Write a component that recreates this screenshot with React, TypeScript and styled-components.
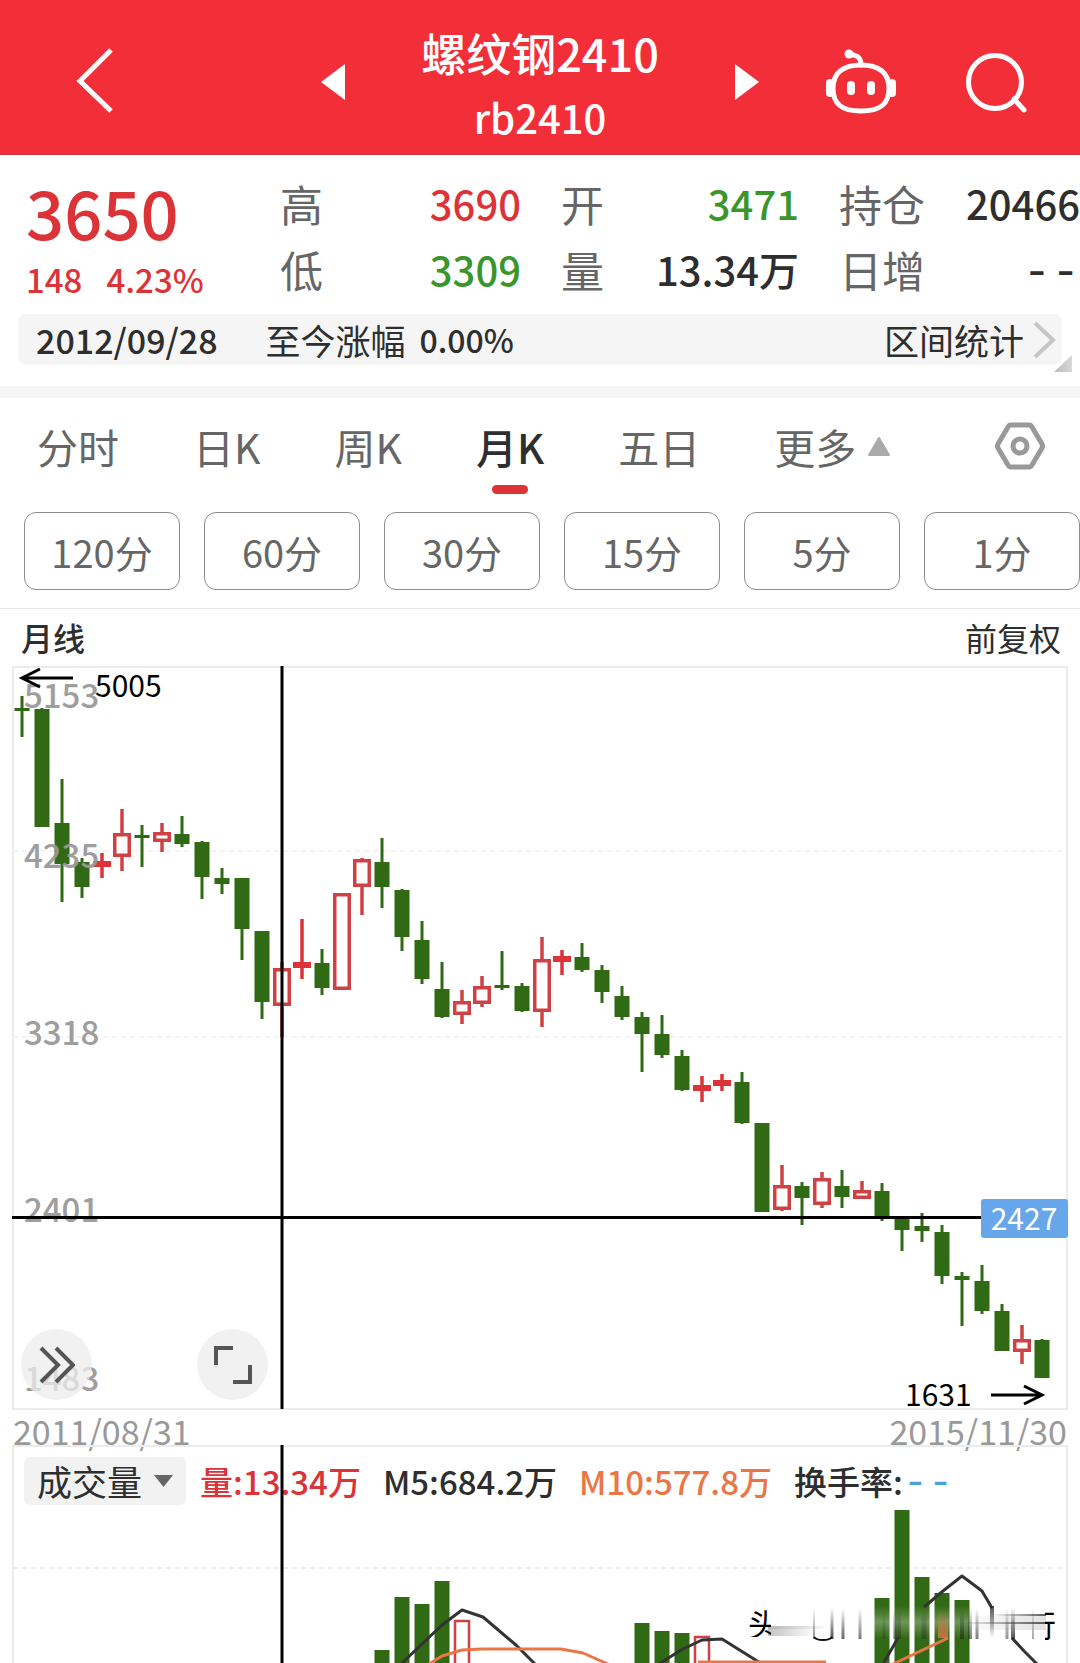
import React, { useState } from "react";
import styled, { createGlobalStyle } from "styled-components";

const c = {
  brand: "#f22f38",
  red: "#dc3338",
  green: "#3a962a",
  ink: "#2e2e2e",
  label: "#666666",
  axis: "#999999",
  candleGreen: "#316a14",
  candleRed: "#cf4145",
  orange: "#ea7646",
  panel: "#f5f5f5",
  rule: "#ececec",
};

const Global = createGlobalStyle`
  * { box-sizing: border-box; }
  body { margin: 0; background: #fff; }
  body, button, select, text {
    font-family: "Noto Sans CJK SC", "Noto Sans", sans-serif;
  }
  button { border: 0; padding: 0; background: none; color: inherit; cursor: pointer; }
  svg { display: block; }
`;

const Page = styled.main`
  overflow: hidden;
  color: ${c.ink};
`;

/* ---------- header ---------- */

const Header = styled.header`
  display: grid;
  grid-template-columns: 1fr auto 1fr;
  align-items: center;
  height: 155px;
  padding-top: 10px;
  background: ${c.brand};
  border-bottom: 1px solid #c8323a;
  color: #fff;
`;

const HeaderStart = styled.div`
  display: flex;
  padding-left: 76px;
  padding-bottom: 4px;
`;

const HeaderEnd = styled.div`
  display: flex;
  align-items: center;
  justify-content: flex-end;
  gap: 70px;
  padding-right: 52px;
`;

const Contract = styled.div`
  display: flex;
  align-items: center;
  justify-content: space-between;
  width: 438px;
`;

const Titles = styled.div`
  padding-top: 6px;
  text-align: center;
  line-height: 65px;
`;

const Name = styled.h1`
  margin: 0;
  font-size: 45px;
  font-weight: 500;
`;

const Code = styled.div`
  font-size: 40px;
  font-weight: 500;
`;

const IconButton = styled.button`
  display: flex;
  flex: none;
`;

/* ---------- quote ---------- */

const Quote = styled.section`
  position: relative;
  padding: 15px 0 21px;
  border-bottom: 12px solid ${c.panel};
`;

const QuoteGrid = styled.div`
  display: grid;
  grid-template-columns: 214px 241fr 238fr 241fr;
  column-gap: 40px;
  height: 132px;
  padding-left: 26px;
`;

const LastPrice = styled.div`
  color: ${c.red};
  font-weight: 500;
  white-space: nowrap;
`;

const Price = styled.div`
  font-size: 67px;
  line-height: 82px;
`;

const Change = styled.div`
  display: flex;
  gap: 24px;
  font-size: 33px;
  line-height: 54px;
`;

const Stats = styled.dl`
  margin: 0;
`;

const Stat = styled.div`
  display: flex;
  justify-content: space-between;
  line-height: 66px;
  white-space: nowrap;
`;

const StatLabel = styled.dt`
  font-size: 43px;
  color: ${c.label};
`;

const StatValue = styled.dd<{ $color: string }>`
  margin: 0;
  font-size: 40px;
  font-weight: 500;
  color: ${(p) => p.$color};
`;

const Dashes = styled.span<{ $color?: string; $size: number }>`
  font-family: "Liberation Mono", monospace;
  font-size: ${(p) => p.$size}px;
  font-weight: 400;
  line-height: 0;
  color: ${(p) => p.$color ?? "inherit"};
`;

const RangeBar = styled.div`
  display: flex;
  align-items: center;
  height: 51px;
  margin: 12px 18px 0;
  padding: 0 6px 0 18px;
  border-radius: 8px;
  background: ${c.panel};
  font-size: 34px;
  line-height: 47px;
  font-weight: 500;
`;

const RangeLabel = styled.span`
  margin-left: 48px;
  margin-right: 14px;
  font-size: 35px;
  font-weight: 400;
`;

const RangeValue = styled.span`
  font-size: 32px;
`;

const RangeButton = styled.button`
  display: flex;
  align-items: center;
  gap: 8px;
  margin-left: auto;
  font-size: 35px;
  line-height: 51px;
`;

const Corner = styled.svg`
  position: absolute;
  right: 8px;
  bottom: 14px;
`;

/* ---------- periods ---------- */

const Tabs = styled.nav`
  display: flex;
  align-items: center;
  gap: 74px;
  height: 96px;
  padding: 0 34px 0 37px;
`;

const Tab = styled.button<{ $active?: boolean }>`
  position: relative;
  display: flex;
  align-items: center;
  gap: 12px;
  font-size: 41px;
  line-height: 96px;
  color: ${(p) => (p.$active ? c.ink : c.label)};
  font-weight: ${(p) => (p.$active ? 500 : 400)};

  &::after {
    content: "";
    display: ${(p) => (p.$active ? "block" : "none")};
    position: absolute;
    bottom: 0;
    left: 50%;
    width: 36px;
    height: 9px;
    margin-left: -18px;
    border-radius: 5px;
    background: ${c.red};
  }
`;

const Settings = styled(IconButton)`
  margin-left: auto;
`;

const Pills = styled.div`
  display: flex;
  gap: 24px;
  padding: 18px 0 18px 24px;
  border-bottom: 1px solid #e4e4e4;
`;

const Pill = styled.button`
  flex: 1;
  height: 78px;
  border: 1px solid #8c8c8c;
  border-radius: 12px;
  font-size: 38px;
  color: ${c.label};
`;

const Caption = styled.div`
  display: flex;
  justify-content: space-between;
  padding: 0 19px 0 21px;
  font-size: 32px;
  line-height: 57px;
`;

const Strong = styled.span`
  font-weight: 500;
`;

/* ---------- charts ---------- */

const ChartBox = styled.section`
  position: relative;
`;

const Svg = styled.svg`
  width: 100%;
  height: auto;
  overflow: visible;
`;

const Tools = styled.div`
  position: absolute;
  left: 21px;
  bottom: 10px;
  display: flex;
  gap: 105px;
`;

const RoundButton = styled.button`
  display: flex;
  align-items: center;
  justify-content: center;
  width: 71px;
  height: 71px;
  border-radius: 50%;
  background: rgba(236, 236, 236, 0.75);
`;

const Dates = styled.div`
  display: flex;
  justify-content: space-between;
  height: 35px;
  padding: 0 13px;
  font-size: 34px;
  line-height: 41px;
  color: ${c.axis};
`;

const Volume = styled.section`
  position: relative;
  height: 218px;
`;

const Legend = styled.div`
  display: flex;
  align-items: center;
  gap: 22px;
  padding: 12px 0 0 24px;
  font-size: 33px;
  line-height: 47px;
  font-weight: 500;
  white-space: nowrap;
`;

const Indicator = styled.label`
  position: relative;
  display: flex;
  margin-right: -8px;
`;

const Select = styled.select`
  appearance: none;
  width: 162px;
  height: 48px;
  padding: 0 0 0 13px;
  border: 0;
  border-radius: 6px;
  background: #f2f2f2;
  color: ${c.ink};
  font-size: 35px;
  line-height: 48px;
`;

const Caret = styled.svg`
  position: absolute;
  right: 13px;
  top: 18px;
  pointer-events: none;
`;

const LegendItem = styled.span<{ $color: string }>`
  color: ${(p) => p.$color};
`;

const VolumeSvg = styled.svg`
  position: absolute;
  top: 0;
  left: 0;
  width: 100%;
  height: 218px;
  pointer-events: none;
`;

/* ---------- data ---------- */

type Kind = "g" | "r" | "f";
// kind, high, body top, body bottom, low (f = flat red body drawn solid)
const candles: [Kind, number, number, number, number][] = [
  ["g", 696, 708, 711, 737], ["g", 708, 709, 827, 827], ["g", 779, 823, 864, 902],
  ["g", 858, 862, 887, 898], ["f", 853, 861, 867, 878], ["r", 809, 833, 857, 871],
  ["g", 825, 835, 838, 867], ["r", 823, 832, 842, 852], ["g", 816, 834, 844, 847],
  ["g", 841, 842, 877, 899], ["g", 868, 878, 884, 894], ["g", 878, 878, 929, 960],
  ["g", 931, 931, 1002, 1019], ["r", 962, 968, 1006, 1037], ["f", 919, 962, 968, 979],
  ["g", 949, 963, 988, 995], ["r", 893, 893, 990, 990], ["r", 858, 859, 887, 915],
  ["g", 838, 862, 887, 908], ["g", 889, 890, 937, 951], ["g", 921, 940, 979, 984],
  ["g", 962, 989, 1017, 1018], ["r", 990, 1001, 1015, 1024], ["r", 976, 986, 1004, 1007],
  ["g", 951, 985, 988, 990], ["g", 983, 986, 1011, 1012], ["r", 937, 959, 1012, 1027],
  ["f", 950, 956, 962, 975], ["g", 943, 957, 970, 972], ["g", 965, 970, 992, 1003],
  ["g", 986, 996, 1017, 1020], ["g", 1012, 1017, 1034, 1072], ["g", 1015, 1034, 1055, 1058],
  ["g", 1050, 1056, 1090, 1091], ["f", 1076, 1085, 1091, 1102], ["f", 1074, 1080, 1086, 1091],
  ["g", 1072, 1082, 1123, 1124], ["g", 1123, 1123, 1212, 1212], ["r", 1165, 1185, 1210, 1211],
  ["g", 1182, 1186, 1198, 1225], ["r", 1172, 1178, 1205, 1208], ["g", 1170, 1186, 1197, 1208],
  ["r", 1181, 1190, 1199, 1199], ["g", 1183, 1191, 1217, 1221], ["g", 1217, 1217, 1230, 1251],
  ["g", 1213, 1226, 1231, 1242], ["g", 1225, 1232, 1276, 1284], ["g", 1272, 1276, 1280, 1326],
  ["g", 1265, 1281, 1311, 1314], ["g", 1304, 1311, 1351, 1351], ["r", 1325, 1339, 1352, 1364],
  ["g", 1339, 1340, 1378, 1378],
];

const volumes: [Kind, number, number][] = [
  ["g", 382, 1650], ["g", 402, 1597], ["g", 422, 1604], ["g", 442, 1581], ["r", 462, 1620],
  ["g", 642, 1623], ["g", 662, 1631], ["g", 682, 1633], ["r", 702, 1636],
  ["g", 882, 1598], ["g", 902, 1510], ["g", 922, 1577], ["g", 942, 1593], ["g", 962, 1600],
];

const axisLabels: [string, number][] = [
  ["5153", 708], ["4235", 868], ["3318", 1045], ["2401", 1222], ["1483", 1391],
];

// x, stroke width, opacity of the streaks in the smeared watermark
const streaks: [number, number, number][] = [
  [814, 2, 0.5], [832, 3, 0.8], [843, 3, 0.7], [860, 3, 0.6], [884, 3, 0.25], [897, 8, 0.4],
  [924, 5, 0.4], [962, 4, 0.6], [970, 4, 0.6], [977, 3, 0.6], [1007, 3, 0.5],
  [1013, 4, 0.8], [1033, 2, 0.4],
];

function Candle({ i }: { i: number }) {
  const [kind, high, top, bottom, low] = candles[i];
  const x = 22 + i * 20;
  if (kind === "g") {
    return (
      <g fill={c.candleGreen}>
        <rect x={x - 1.5} y={high} width={3} height={low - high} />
        <rect x={x - 7.5} y={top} width={15} height={bottom - top} />
      </g>
    );
  }
  const color = kind === "f" ? c.red : c.candleRed;
  return (
    <g fill={color}>
      <rect x={x - 1.75} y={high} width={3.5} height={top - high} />
      <rect x={x - 1.75} y={bottom} width={3.5} height={low - bottom} />
      {kind === "f" ? (
        <rect x={x - 9} y={top} width={18} height={bottom - top} />
      ) : (
        <rect x={x - 7.25} y={top + 1.75} width={14.5} height={bottom - top - 3.5} fill="none" stroke={color} strokeWidth={3.5} />
      )}
    </g>
  );
}

function PriceChart() {
  return (
    <Svg viewBox="0 666 1080 744" role="img" aria-label="月K线图">
      <rect x={13} y={667} width={1054} height={742} fill="none" stroke={c.rule} strokeWidth={2} />
      {[851, 1037].map((y) => (
        <line key={y} x1={13} x2={1067} y1={y} y2={y} stroke="#efefef" strokeWidth={1.5} strokeDasharray="5 4" />
      ))}
      {candles.map((_, i) => <Candle key={i} i={i} />)}
      <g fill={c.axis} fontSize={33} fontWeight={500} opacity={0.95}>
        {axisLabels.map(([t, y]) => <text key={t} x={24} y={y}>{t}</text>)}
      </g>
      <g fill="none" stroke="#000" strokeWidth={3}>
        <path d="M73 678H23M40 669L22 678l18 9" />
        <path d="M991 1395h50M1024 1386l18 9-18 9" />
        <path d="M282 666v743" />
        <path d="M12 1217.5h970" />
      </g>
      <g fill="#000" fontSize={30}>
        <text x={95} y={697}>5005</text>
        <text x={905} y={1406}>1631</text>
      </g>
      <rect x={981} y={1199} width={87} height={39} rx={3} fill="#68a6ec" />
      <text x={1024} y={1230} fontSize={30} textAnchor="middle" fill="#fff">2427</text>
    </Svg>
  );
}

function VolumeChart() {
  return (
    <VolumeSvg viewBox="0 1445 1080 218" preserveAspectRatio="xMidYMin meet" role="img" aria-label="成交量图">
      <defs>
        <linearGradient id="fall" x1="0" y1="0" x2="0" y2="1">
          <stop offset="0" stopColor="#222" stopOpacity={0} />
          <stop offset="1" stopColor="#222" />
        </linearGradient>
        <linearGradient id="rise" x1="0" y1="0" x2="0" y2="1">
          <stop offset="0" stopColor="#222" />
          <stop offset="1" stopColor="#222" stopOpacity={0} />
        </linearGradient>
        <linearGradient id="haze" x1="0" y1="0" x2="0" y2="1">
          <stop offset="0" stopColor="#fff" stopOpacity={0} />
          <stop offset="0.5" stopColor="#fff" stopOpacity={0.3} />
          <stop offset="1" stopColor="#fff" stopOpacity={0} />
        </linearGradient>
        <linearGradient id="glow" x1="0" y1="0" x2="0" y2="1">
          <stop offset="0" stopColor={c.orange} stopOpacity={0} />
          <stop offset="1" stopColor={c.orange} stopOpacity={0.8} />
        </linearGradient>
        <linearGradient id="toRight">
          <stop offset="0" stopColor="#333" stopOpacity={0} />
          <stop offset="1" stopColor="#333" stopOpacity={0.8} />
        </linearGradient>
        <linearGradient id="toLeft">
          <stop offset="0" stopColor="#333" stopOpacity={0.6} />
          <stop offset="1" stopColor="#333" stopOpacity={0} />
        </linearGradient>
        <clipPath id="head"><rect x={745} y={1606} width={26} height={31} /></clipPath>
        <clipPath id="tail"><rect x={1045} y={1606} width={14} height={36} /></clipPath>
      </defs>
      <path d="M13 1663V1446h1054v217" fill="none" stroke={c.rule} strokeWidth={2} />
      <line x1={13} x2={1067} y1={1568} y2={1568} stroke="#e8e8e8" strokeWidth={1.5} strokeDasharray="5 4" />
      {volumes.map(([kind, x, y]) =>
        kind === "g" ? (
          <rect key={x} x={x - 7.5} y={y} width={15} height={1670 - y} fill={c.candleGreen} />
        ) : (
          <rect key={x} x={x - 7} y={y + 1} width={14} height={60} fill="none" stroke={c.candleRed} strokeWidth={2.5} />
        )
      )}
      <g fill="none" strokeWidth={3} strokeLinejoin="round">
        <g stroke="#333">
          <path d="M401 1664L423 1643 442 1625 462 1610 483 1617 516 1645 535 1664" />
          <path d="M659 1664L681 1650 702 1640 722 1639 762 1664" />
          <path d="M883 1664L898 1638" />
          <path d="M924 1607L943 1591 962 1576 982 1591 992 1608" />
          <path d="M1012 1638L1024 1651 1037 1664" />
        </g>
        <g stroke={c.orange}>
          <path d="M429 1664L442 1656 462 1650 482 1649H561L583 1653 608 1664" />
          <path d="M698 1662H826" />
          <path d="M893 1664L948 1638" />
        </g>
      </g>
      <rect x={874} y={1606} width={96} height={32} fill="url(#haze)" />
      <rect x={938} y={1610} width={10} height={28} fill="url(#glow)" />
      <rect x={990} y={1606} width={4} height={32} fill="url(#rise)" opacity={0.8} />
      {streaks.map(([x, w, o]) => (
        <rect key={x} x={x - w / 2} y={1608} width={w} height={31} fill="url(#fall)" opacity={o} />
      ))}
      <path d="M814 1637q2 3 9 3t9-3" fill="none" stroke="#111" strokeWidth={2} />
      <rect x={990} y={1614} width={56} height={2} fill="url(#toRight)" />
      <rect x={960} y={1622} width={86} height={2} fill="url(#toRight)" />
      <rect x={960} y={1616} width={86} height={14} fill="url(#toRight)" opacity={0.18} />
      <rect x={768} y={1626} width={62} height={3} fill="url(#toLeft)" opacity={0.6} />
      <rect x={768} y={1629} width={48} height={7} fill="url(#toLeft)" opacity={0.5} />
      <g fontSize={31} fill="#000">
        <text x={748} y={1636} clipPath="url(#head)">头</text>
        <text x={1025} y={1637} clipPath="url(#tail)">行</text>
      </g>
      <path d="M282 1445v218" stroke="#000" strokeWidth={3} />
    </VolumeSvg>
  );
}

const stats: [string, string, string][][] = [
  [["高", "3690", c.red], ["低", "3309", c.green]],
  [["开", "3471", c.green], ["量", "13.34万", c.ink]],
  [["持仓", "20466", c.ink], ["日增", "--", c.ink]],
];

const periods = ["分时", "日K", "周K", "月K", "五日"];
const minutes = ["120分", "60分", "30分", "15分", "5分", "1分"];

export default function App() {
  const [period, setPeriod] = useState("月K");
  return (
    <Page>
      <Global />
      <Header>
        <HeaderStart>
          <IconButton aria-label="返回">
            <svg width="38" height="66" viewBox="0 0 38 66" fill="none" stroke="#fff" strokeWidth="5">
              <path d="M35 3L4 34l31 30" />
            </svg>
          </IconButton>
        </HeaderStart>
        <Contract>
          <IconButton aria-label="上一个">
            <svg width="24" height="36" viewBox="0 0 24 36" fill="#fff"><path d="M24 0v36L0 18z" /></svg>
          </IconButton>
          <Titles>
            <Name>螺纹钢2410</Name>
            <Code>rb2410</Code>
          </Titles>
          <IconButton aria-label="下一个">
            <svg width="24" height="36" viewBox="0 0 24 36" fill="#fff"><path d="M0 0v36l24-18z" /></svg>
          </IconButton>
        </Contract>
        <HeaderEnd>
          <IconButton aria-label="智能助手">
            <svg width="70" height="66" viewBox="0 0 70 66" fill="none" stroke="#fff" strokeWidth="5">
              <path d="M35 16c17 0 28 7 28 23.500S53 62 35 62 7 56 7 39.500 18 16 35 16z" />
              <path d="M35 16c0-6-2-9.500-10-10.500" strokeLinecap="round" />
              <g fill="#fff" stroke="none">
                <circle cx="23" cy="5" r="4.500" />
                <rect x="0" y="30" width="8" height="18" rx="4" />
                <rect x="62" y="30" width="8" height="18" rx="4" />
                <rect x="21" y="32" width="8" height="14" rx="4" />
                <rect x="41" y="32" width="8" height="14" rx="4" />
              </g>
            </svg>
          </IconButton>
          <IconButton aria-label="搜索">
            <svg width="62" height="62" viewBox="0 0 62 62" fill="none" stroke="#fff" strokeWidth="5">
              <circle cx="29" cy="31" r="26.500" />
              <path d="M48 48l10 11" strokeLinecap="round" />
            </svg>
          </IconButton>
        </HeaderEnd>
      </Header>

      <Quote>
        <QuoteGrid>
          <LastPrice>
            <Price>3650</Price>
            <Change><span>148</span><span>4.23%</span></Change>
          </LastPrice>
          {stats.map((group) => (
            <Stats key={group[0][0]}>
              {group.map(([label, value, color]) => (
                <Stat key={label}>
                  <StatLabel>{label}</StatLabel>
                  <StatValue $color={color}>{value === "--" ? <Dashes $size={48}>--</Dashes> : value}</StatValue>
                </Stat>
              ))}
            </Stats>
          ))}
        </QuoteGrid>
        <RangeBar>
          <span>2012/09/28</span>
          <RangeLabel>至今涨幅</RangeLabel>
          <RangeValue>0.00%</RangeValue>
          <RangeButton>
            区间统计
            <svg width="24" height="38" viewBox="0 0 24 38" fill="none" stroke="#c6c6c6" strokeWidth="4">
              <path d="M3 2l18 17L3 36" />
            </svg>
          </RangeButton>
        </RangeBar>
        <Corner width="18" height="17" viewBox="0 0 18 17">
          <defs>
            <linearGradient id="corner"><stop offset="0" stopColor="#bbb" /><stop offset="1" stopColor="#d8d8d8" /></linearGradient>
          </defs>
          <path d="M18 0v17H0z" fill="url(#corner)" />
        </Corner>
      </Quote>

      <Tabs>
        {periods.map((p) => (
          <Tab key={p} $active={p === period} onClick={() => setPeriod(p)}>{p}</Tab>
        ))}
        <Tab aria-expanded="true">
          更多
          <svg width="22" height="19" viewBox="0 0 22 19" fill="#aaa" stroke="#aaa" strokeWidth="2" strokeLinejoin="round">
            <path d="M11 1L1 18h20z" />
          </svg>
        </Tab>
        <Settings aria-label="设置">
          <svg width="52" height="52" viewBox="0 0 52 52" fill="none" stroke="#999" strokeWidth="5" strokeLinejoin="round">
            <path d="M17 5h18q2 0 3 2l10 17q1 2 0 4L38 45q-1 2-3 2H17q-2 0-3-2L4 28q-1-2 0-4L14 7q1-2 3-2z" />
            <circle cx="26" cy="26" r="7" />
          </svg>
        </Settings>
      </Tabs>
      <Pills>
        {minutes.map((m) => <Pill key={m}>{m}</Pill>)}
      </Pills>

      <Caption>
        <Strong>月线</Strong>
        <span>前复权</span>
      </Caption>
      <ChartBox>
        <PriceChart />
        <Tools>
          <RoundButton aria-label="展开">
            <svg width="36" height="38" viewBox="0 0 36 38" fill="none" stroke="#555" strokeWidth="4">
              <path d="M2 2l17 17L2 36M17 2l17 17-17 17" />
            </svg>
          </RoundButton>
          <RoundButton aria-label="全屏">
            <svg width="38" height="38" viewBox="0 0 38 38" fill="none" stroke="#555" strokeWidth="4">
              <path d="M2 19V2h17M36 19v17H19" />
            </svg>
          </RoundButton>
        </Tools>
      </ChartBox>
      <Dates>
        <span>2011/08/31</span>
        <span>2015/11/30</span>
      </Dates>
      <Volume>
        <Legend>
          <Indicator>
            <Select aria-label="指标" defaultValue="成交量">
              <option>成交量</option>
            </Select>
            <Caret width="19" height="12" viewBox="0 0 19 12" fill="#666"><path d="M0 0h19l-9.500 12z" /></Caret>
          </Indicator>
          <LegendItem $color={c.red}>量:13.34万</LegendItem>
          <LegendItem $color={c.ink}>M5:684.2万</LegendItem>
          <LegendItem $color={c.orange}>M10:577.8万</LegendItem>
          <LegendItem $color={c.ink}>
            换手率:<Dashes $size={42} $color="#4aa3d8">--</Dashes>
          </LegendItem>
        </Legend>
        <VolumeChart />
      </Volume>
    </Page>
  );
}
